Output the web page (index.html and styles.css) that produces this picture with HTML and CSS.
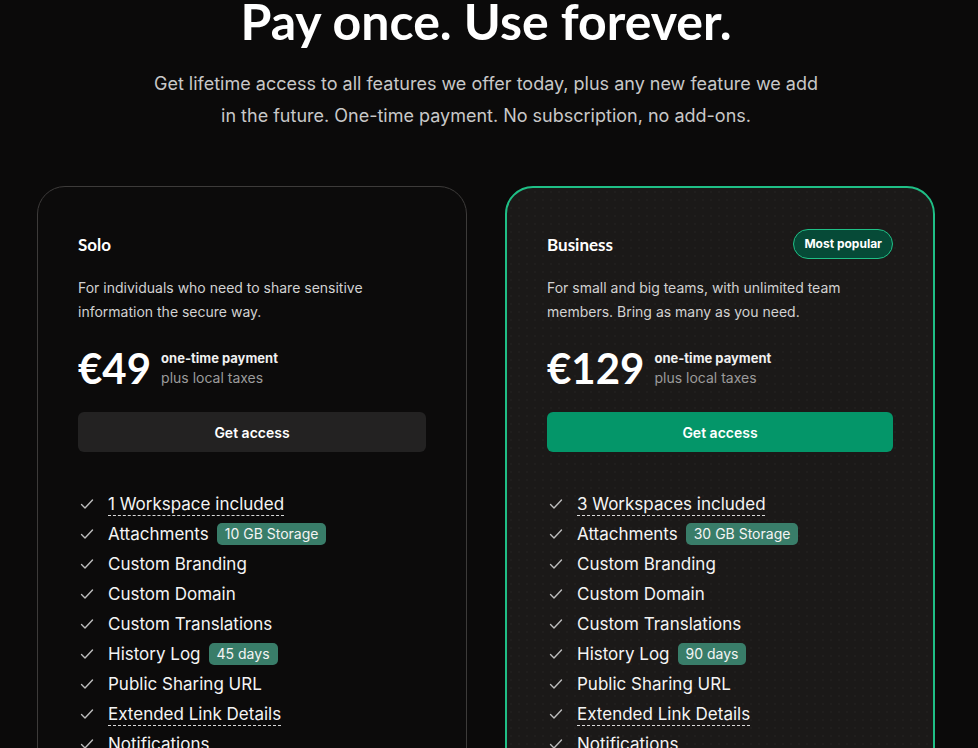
FILE: index.html
```html
<!DOCTYPE html>
<html>
<head>
  <title>Pricing</title>
  <meta charset="UTF-8">
  <link rel="stylesheet" href="styles.css">
</head>
<body>

<div class="page">
  <h1 class="title">Pay once. Use forever.</h1>
  <p class="lead">Get lifetime access to all features we offer today, plus any new feature we add in the future. One-time payment. No subscription, no add-ons.</p>

  <div class="plans">
    <div class="plan">
      <div class="plan-head">
        <h2 class="plan-name">Solo</h2>
      </div>
      <p class="plan-desc">For individuals who need to share sensitive information the secure way.</p>
      <div class="price">
        <span class="amount">€49</span>
        <div class="price-note">
          <strong>one-time payment</strong>
          <span>plus local taxes</span>
        </div>
      </div>
      <button class="button">Get access</button>
      <ul class="features">
        <li><svg class="check" viewBox="0 0 16 16"><path d="M2.5 8.5l3.5 3.5 7.5-8"/></svg><span class="dashed">1 Workspace included</span></li>
        <li><svg class="check" viewBox="0 0 16 16"><path d="M2.5 8.5l3.5 3.5 7.5-8"/></svg>Attachments <span class="tag">10 GB Storage</span></li>
        <li><svg class="check" viewBox="0 0 16 16"><path d="M2.5 8.5l3.5 3.5 7.5-8"/></svg>Custom Branding</li>
        <li><svg class="check" viewBox="0 0 16 16"><path d="M2.5 8.5l3.5 3.5 7.5-8"/></svg>Custom Domain</li>
        <li><svg class="check" viewBox="0 0 16 16"><path d="M2.5 8.5l3.5 3.5 7.5-8"/></svg>Custom Translations</li>
        <li><svg class="check" viewBox="0 0 16 16"><path d="M2.5 8.5l3.5 3.5 7.5-8"/></svg>History Log <span class="tag">45 days</span></li>
        <li><svg class="check" viewBox="0 0 16 16"><path d="M2.5 8.5l3.5 3.5 7.5-8"/></svg>Public Sharing URL</li>
        <li><svg class="check" viewBox="0 0 16 16"><path d="M2.5 8.5l3.5 3.5 7.5-8"/></svg><span class="dashed">Extended Link Details</span></li>
        <li><svg class="check" viewBox="0 0 16 16"><path d="M2.5 8.5l3.5 3.5 7.5-8"/></svg>Notifications</li>
        <li><svg class="check" viewBox="0 0 16 16"><path d="M2.5 8.5l3.5 3.5 7.5-8"/></svg>Priority Support</li>
      </ul>
    </div>

    <div class="plan plan-popular">
      <div class="plan-head">
        <h2 class="plan-name">Business</h2>
        <span class="popular">Most popular</span>
      </div>
      <p class="plan-desc">For small and big teams, with unlimited team members. Bring as many as you need.</p>
      <div class="price">
        <span class="amount">€129</span>
        <div class="price-note">
          <strong>one-time payment</strong>
          <span>plus local taxes</span>
        </div>
      </div>
      <button class="button button-green">Get access</button>
      <ul class="features">
        <li><svg class="check" viewBox="0 0 16 16"><path d="M2.5 8.5l3.5 3.5 7.5-8"/></svg><span class="dashed">3 Workspaces included</span></li>
        <li><svg class="check" viewBox="0 0 16 16"><path d="M2.5 8.5l3.5 3.5 7.5-8"/></svg>Attachments <span class="tag">30 GB Storage</span></li>
        <li><svg class="check" viewBox="0 0 16 16"><path d="M2.5 8.5l3.5 3.5 7.5-8"/></svg>Custom Branding</li>
        <li><svg class="check" viewBox="0 0 16 16"><path d="M2.5 8.5l3.5 3.5 7.5-8"/></svg>Custom Domain</li>
        <li><svg class="check" viewBox="0 0 16 16"><path d="M2.5 8.5l3.5 3.5 7.5-8"/></svg>Custom Translations</li>
        <li><svg class="check" viewBox="0 0 16 16"><path d="M2.5 8.5l3.5 3.5 7.5-8"/></svg>History Log <span class="tag">90 days</span></li>
        <li><svg class="check" viewBox="0 0 16 16"><path d="M2.5 8.5l3.5 3.5 7.5-8"/></svg>Public Sharing URL</li>
        <li><svg class="check" viewBox="0 0 16 16"><path d="M2.5 8.5l3.5 3.5 7.5-8"/></svg><span class="dashed">Extended Link Details</span></li>
        <li><svg class="check" viewBox="0 0 16 16"><path d="M2.5 8.5l3.5 3.5 7.5-8"/></svg>Notifications</li>
        <li><svg class="check" viewBox="0 0 16 16"><path d="M2.5 8.5l3.5 3.5 7.5-8"/></svg>Priority Support</li>
      </ul>
    </div>
  </div>
</div>

</body>
</html>
```

FILE: styles.css
```css
body {
    margin: 0;
    background-color: #0b0a0a;
    color: #f2f2f2;
    font-family: Inter, "Liberation Sans", sans-serif;
}
.page {
    padding: 0 43px 40px 37px;
}
.title {
    margin: -7px 0 0;
    font-family: Lato, "Liberation Sans", sans-serif;
    font-size: 50px;
    line-height: 56px;
    font-weight: 700;
    text-align: center;
    color: #fff;
}
.lead {
    width: 680px;
    margin: 19px auto 0;
    font-size: 18px;
    line-height: 32px;
    text-align: center;
    color: #c8c8c8;
}
.plans {
    display: grid;
    grid-template-columns: minmax(0, 1fr) minmax(0, 1fr);
    gap: 38px;
    margin-top: 54px;
}
.plan {
    border: 1.5px solid #3d3b3a;
    border-radius: 28px;
    background-color: #0c0b0b;
    padding: 42px 40px 40px;
}
.plan-popular {
    border: 2px solid #1fbf86;
    padding: 41px 40px 40px;
    background-color: #1b1918;
    background-image: radial-gradient(rgba(255, 255, 255, 0.022) 1px, transparent 1px);
    background-size: 8px 8px;
}
.plan-head {
    display: flex;
    align-items: center;
    justify-content: space-between;
    height: 30px;
}
.plan-name {
    margin: 0;
    font-family: Lato, "Liberation Sans", sans-serif;
    font-size: 17px;
    font-weight: 700;
    color: #fff;
}
.popular {
    padding: 0 10px;
    line-height: 28px;
    border: 1px solid #1fbf86;
    border-radius: 15px;
    background-color: #064a37;
    font-size: 12px;
    font-weight: 700;
    color: #fff;
}
.plan-desc {
    margin: 17px 0 0;
    font-size: 14px;
    line-height: 24px;
    color: #d2d2d2;
}
.price {
    display: flex;
    align-items: center;
    gap: 10px;
    margin-top: 22px;
}
.amount {
    font-family: Lato, "Liberation Sans", sans-serif;
    font-size: 42px;
    line-height: 44px;
    font-weight: 700;
    color: #fff;
}
.price-note {
    display: flex;
    flex-direction: column;
    font-size: 14px;
    line-height: 20px;
    color: #9b9b9b;
}
.price-note strong {
    font-size: 13px;
    color: #f0f0f0;
}
.button {
    display: block;
    width: 100%;
    height: 40px;
    margin-top: 22px;
    border: 0;
    border-radius: 6px;
    background-color: #232222;
    color: #fff;
    font-family: Inter, "Liberation Sans", sans-serif;
    font-size: 14px;
    font-weight: 600;
}
.button-green {
    background-color: #049669;
}
.features {
    list-style: none;
    margin: 37px 0 0;
    padding: 0;
}
.features li {
    display: flex;
    align-items: center;
    height: 30px;
    font-size: 17px;
    color: #f4f4f4;
}
.check {
    width: 16px;
    height: 16px;
    margin: 0 13px 0 1px;
    fill: none;
    stroke: #bdbdbd;
    stroke-width: 1.4;
    stroke-linecap: round;
    stroke-linejoin: round;
}
.dashed {
    text-decoration: underline dashed #d8d8d8 1px;
    text-underline-offset: 5px;
}
.tag {
    margin-left: 8px;
    padding: 0 8px;
    line-height: 22px;
    border-radius: 5px;
    background-color: #397d69;
    font-size: 14px;
    color: #f4f4f4;
}
```
